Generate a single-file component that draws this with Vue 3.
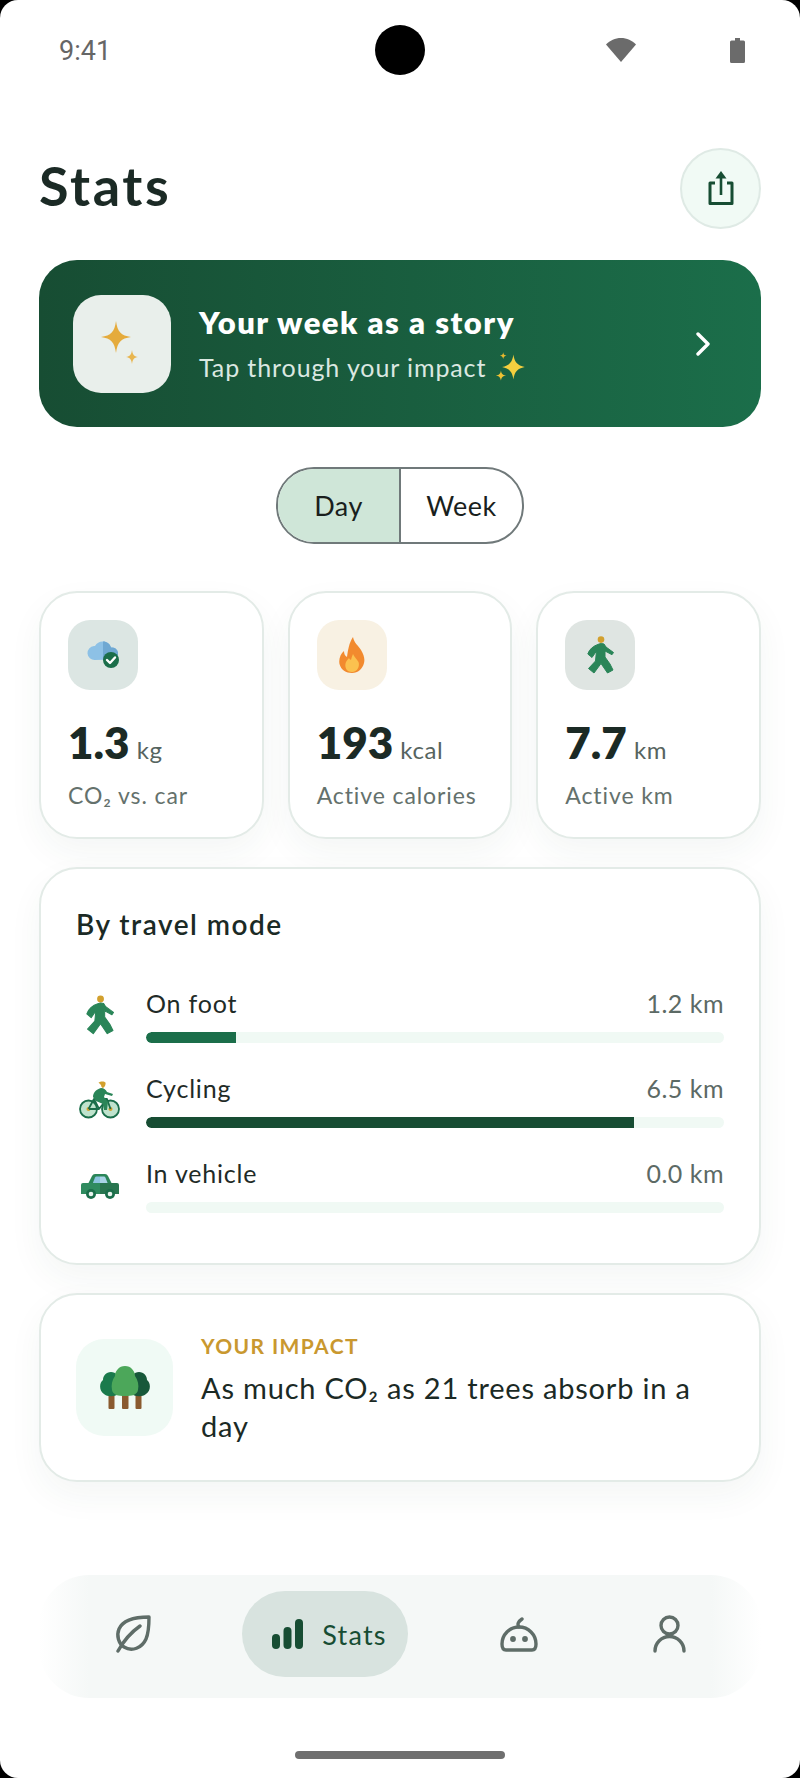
<script setup>
const stats = [
  { id: 'co2', value: '1.3', unit: 'kg', label: 'CO₂ vs. car', tint: 'tint-green' },
  { id: 'fire', value: '193', unit: 'kcal', label: 'Active calories', tint: 'tint-orange' },
  { id: 'walk', value: '7.7', unit: 'km', label: 'Active km', tint: 'tint-grey' },
]

const modes = [
  { id: 'foot', name: 'On foot', value: '1.2 km', pct: 15.6, color: '#1b6e4a' },
  { id: 'bike', name: 'Cycling', value: '6.5 km', pct: 84.4, color: '#174d33' },
  { id: 'car', name: 'In vehicle', value: '0.0 km', pct: 0, color: '#1b6e4a' },
]

const walkerBody = 'M12 8Q14 7 17 8L19 11 26.500 16.500 25 18.700 18 15 18 21 23 28 26 34 20.500 37 14 27.500 7 37 1.500 32.500 8.500 25 9.500 15 5 21.500.8 18Q3 11 12 8Z'
</script>

<template>
  <div class="frame">
    <div class="screen">
      <div class="status">
        <span class="time">9:41</span>
        <span class="camera"></span>
        <div class="status-icons">
          <svg width="30" height="24" viewBox="0 0 30 24"><path d="M15 24 0 6.5C4 2.5 9 0 15 0s11 2.5 15 6.5z" fill="#6b6b6b" /></svg>
          <svg width="15" height="25" viewBox="0 0 15 25"><path d="M5 0h5v2.500h3.500q1.500 0 1.500 1.500v19.500q0 1.500-1.500 1.500h-12q-1.500 0-1.500-1.500v-19.500q0-1.500 1.500-1.500h3.500z" fill="#6b6b6b" /></svg>
        </div>
      </div>

      <main class="content">
        <header class="head">
          <h1>Stats</h1>
          <button class="share">
            <svg width="26" height="34" viewBox="0 0 26 34" fill="none">
              <path d="M7 12H2v20.500h22V12h-5" stroke="#174d33" stroke-width="3" stroke-linejoin="round" />
              <path d="M13 6v18" stroke="#174d33" stroke-width="2.600" />
              <path d="M13 0l5.500 7.500h-11z" fill="#174d33" />
            </svg>
          </button>
        </header>

        <section class="story">
          <div class="story-icon">
            <svg width="46" height="52" viewBox="0 0 46 52">
              <path d="M17 3c1.500 11 5 14.500 15 16-10 1.500-13.500 5-15 16-1.500-11-5-14.500-15-16 10-1.500 13.500-5 15-16z" fill="#e5ab3c" />
              <path d="M33 32c.6 4.500 2 6.400 6 7-4 .6-5.400 2.500-6 7-.6-4.500-2-6.400-6-7 4-.6 5.400-2.500 6-7z" fill="#e8b54e" />
            </svg>
          </div>
          <div class="story-text">
            <div class="story-title">Your week as a story</div>
            <div class="story-sub">
              Tap through your impact
              <svg class="sparkles" width="34" height="32" viewBox="0 0 30 28">
                <path d="M18 3c1 7 3.500 9.500 10 11-6.500 1.500-9 4-10 11-1-7-3.500-9.500-10-11 6.500-1.500 9-4 10-11z" fill="#f5d03f" />
                <path d="M7 17c.5 3 1.500 4 4.500 4.500-3 .5-4 1.500-4.500 4.500-.5-3-1.500-4-4.500-4.500 3-.5 4-1.500 4.500-4.500z" fill="#f0c233" />
                <path d="M9 1c.3 2 1 2.700 3 3-2 .3-2.700 1-3 3-.3-2-1-2.700-3-3 2-.3 2.700-1 3-3z" fill="#e8b82e" />
              </svg>
            </div>
          </div>
          <svg class="chevron" width="16" height="24" viewBox="0 0 16 24" fill="none">
            <path d="M3 2l10 10L3 22" stroke="#fff" stroke-width="3.400" stroke-linecap="round" stroke-linejoin="round" />
          </svg>
        </section>

        <div class="toggle">
          <span class="seg seg-on">Day</span>
          <span class="seg">Week</span>
        </div>

        <section class="stat-row">
          <div v-for="s in stats" :key="s.id" class="card stat">
            <div class="stat-icon" :class="s.tint">
              <svg v-if="s.id === 'co2'" width="34" height="28" viewBox="0 0 34 28">
                <path d="M9 19a7 7 0 0 1-1-14h1a9 9 0 0 1 8-4.500c4 0 7 2.500 8 6a6 6 0 0 1 2 12z" fill="#8dc1e6" />
                <path d="M17 .5c4 0 7 2.500 8 6a6 6 0 0 1 2 12H17z" fill="#6fa8d2" />
                <circle cx="25" cy="19" r="8" fill="#1b6e4a" />
                <path d="M21 19l3 3 5-5.500" fill="none" stroke="#fff" stroke-width="2.400" stroke-linecap="round" stroke-linejoin="round" />
              </svg>
              <svg v-else-if="s.id === 'fire'" width="26" height="36" viewBox="0 0 26 36">
                <path d="M14 0c1 6 5 8 8 13 3 5 4 9 3 13-1.500 6-6 10-12 10S2 33 .5 27C-.5 22 1.500 17 5 14c0 3 1 5 3 6 1-7 2-14 6-20z" fill="#f28a2e" />
                <path d="M14 17c1 3 4 5 5.500 8 1.500 4-1 10-6.500 10S5 30 7 25c1-2 2-2.500 3-4 .5 1 1 1.500 2 2 .5-2 1-4 2-6z" fill="#fbc14f" />
              </svg>
              <svg v-else width="27" height="38" viewBox="0 0 27 38">
                <circle cx="14" cy="3.600" r="3.300" fill="#d2a02e" />
                <path :d="walkerBody" fill="#2a8558" stroke="#2a8558" stroke-linejoin="round" />
              </svg>
            </div>
            <div class="stat-value"><b>{{ s.value }}</b> <span>{{ s.unit }}</span></div>
            <div class="stat-label">{{ s.label }}</div>
          </div>
        </section>

        <section class="card modes">
          <h2>By travel mode</h2>
          <div v-for="m in modes" :key="m.id" class="mode">
            <div class="mode-icon">
              <svg v-if="m.id === 'foot'" width="28" height="40" viewBox="0 0 27 38">
                <circle cx="14" cy="3.600" r="3.300" fill="#d2a02e" />
                <path :d="walkerBody" fill="#2a8558" stroke="#2a8558" stroke-linejoin="round" />
              </svg>
              <svg v-else-if="m.id === 'bike'" width="41" height="38" viewBox="0 0 41 38" fill="none">
                <circle cx="9.500" cy="28" r="8.500" fill="#bfe3cd" stroke="#1b6e4a" stroke-width="1.800" />
                <circle cx="31.500" cy="28" r="8.500" fill="#bfe3cd" stroke="#1b6e4a" stroke-width="1.800" />
                <circle cx="9.500" cy="28" r="2" fill="#d2a02e" />
                <circle cx="31.500" cy="28" r="2" fill="#d2a02e" />
                <path d="M9.500 28 15 18h13l3.500 10M15 18l5 10h-10M28 18l-8 10" stroke="#1b6e4a" stroke-width="1.800" stroke-linejoin="round" />
                <path d="M19.500 1.500c2-1.500 6-1.500 7 0 .5 1.500-.5 4.500-2.500 5.500-1 0-2-1.500-2-3z" fill="#d2a02e" />
                <path d="M14 16c0-5 4-8 8-9 3 0 5 2 6 4l6 2-1 2-7-2-1 3 4 5-1 8h-3l-1-6-7-3z" fill="#2a8558" />
              </svg>
              <svg v-else class="car" width="38" height="26" viewBox="0 0 38 26">
                <path d="M7 10 11 2q1-2 3-2h10q2 0 3 2l4 8z" fill="#2a8558" />
                <path d="M11.500 10 14 3.500q.4-1 1.400-1H19V10z" fill="#8cc4df" />
                <path d="M19 2.500h4q1 0 1.400 1L27 10h-8z" fill="#a8d3e6" />
                <path d="M2 9h17v11H0v-9q0-2 2-2z" fill="#2f8b5f" />
                <path d="M19 9h17q2 0 2 2v9H19z" fill="#28754f" />
                <circle cx="10" cy="20" r="5" fill="#1b6e4a" />
                <circle cx="10" cy="20" r="2.300" fill="#e8f4ee" />
                <circle cx="29" cy="20" r="5" fill="#1b6e4a" />
                <circle cx="29" cy="20" r="2.300" fill="#e8f4ee" />
              </svg>
            </div>
            <div class="mode-body">
              <div class="mode-line">
                <span class="mode-name">{{ m.name }}</span>
                <span class="mode-val">{{ m.value }}</span>
              </div>
              <div class="track">
                <div class="fill" :style="{ width: m.pct + '%', background: m.color }"></div>
              </div>
            </div>
          </div>
        </section>

        <section class="card impact">
          <div class="impact-icon">
            <svg width="50" height="43" viewBox="0 0 50 43">
              <rect x="8.500" y="28" width="6" height="15" rx="1" fill="#8a5a2f" />
              <rect x="35.500" y="28" width="6" height="15" rx="1" fill="#8a5a2f" />
              <path d="M11 6c5 0 8 4 8 8 3 3 3 11-1 14-3 3-11 3-14 0-5-3-5-11-1-14 0-4 3-8 8-8z" fill="#1a7a4c" />
              <path d="M39 6c-5 0-8 4-8 8-3 3-3 11 1 14 3 3 11 3 14 0 5-3 5-11 1-14 0-4-3-8-8-8z" fill="#17583a" />
              <rect x="22" y="26" width="6.500" height="17" rx="1" fill="#8a5a2f" />
              <path d="M25 0c6 0 10 5 10 10 3 4 4 9 3 14-1 5-6 6-13 6s-12-1-13-6c-1-5 0-10 3-14 0-5 4-10 10-10z" fill="#4ca75a" />
            </svg>
          </div>
          <div class="impact-text">
            <div class="impact-tag">YOUR IMPACT</div>
            <div class="impact-body">As much CO₂ as 21 trees absorb in a day</div>
          </div>
        </section>
      </main>

      <nav class="nav">
        <div class="nav-item">
          <svg width="36" height="38" viewBox="0 0 36 38" fill="none" stroke="#5f6d68" stroke-width="3.400" stroke-linecap="round" stroke-linejoin="round">
            <path d="M34 2C20 2 8 5 4 14c-3 7 0 15 5 18 8 5 18 1 22-8 3-7 3-15 3-22z" />
            <path d="M3 36C8 27 15 18 25 11" />
          </svg>
        </div>
        <div class="nav-item nav-on">
          <svg width="31" height="30" viewBox="0 0 31 30">
            <rect x="0" y="15" width="8" height="15" rx="4" fill="#174d33" />
            <rect x="11.500" y="8" width="8" height="22" rx="4" fill="#174d33" />
            <rect x="23" y="0" width="8" height="30" rx="4" fill="#174d33" />
          </svg>
          <span>Stats</span>
        </div>
        <div class="nav-item">
          <svg width="38" height="35" viewBox="0 0 38 35" fill="none" stroke="#5f6d68" stroke-width="3.400" stroke-linecap="round" stroke-linejoin="round">
            <path d="M2 27a17 17 0 0 1 34 0q0 6-4 6H6q-4 0-4-6z" />
            <path d="M19 10q-3-4 3-8" />
            <circle cx="13" cy="22" r="1.200" fill="#5f6d68" />
            <circle cx="25" cy="22" r="1.200" fill="#5f6d68" />
          </svg>
        </div>
        <div class="nav-item">
          <svg width="33" height="38" viewBox="0 0 33 38" fill="none" stroke="#5f6d68" stroke-width="3.400" stroke-linecap="round">
            <circle cx="16.500" cy="10.500" r="8.500" />
            <path d="M2 36a14.500 14.500 0 0 1 29 0" />
          </svg>
        </div>
      </nav>

      <div class="home-bar"></div>
    </div>
  </div>
</template>

<style>
html, body { margin: 0; background: #000; }
</style>

<style scoped>
.frame {
  width: 800px;
  height: 1778px;
  background: #000;
  overflow: hidden;
}
.screen {
  width: 800px;
  height: 1778px;
  background: #fff;
  border-radius: 18px;
  display: flex;
  flex-direction: column;
  overflow: hidden;
  font-family: "Lato", "Noto Sans", sans-serif;
  color: #1b2a25;
  box-sizing: border-box;
}
.status {
  height: 100px;
  flex: none;
  display: flex;
  align-items: center;
  justify-content: space-between;
  padding: 0 55px 0 59px;
  position: relative;
}
.time {
  font-family: "Roboto", sans-serif;
  font-size: 27px;
  color: #666;
  margin-top: 2px;
}
.camera {
  position: absolute;
  left: 375px;
  top: 25px;
  width: 50px;
  height: 50px;
  border-radius: 50%;
  background: #000;
}
.status-icons {
  display: flex;
  align-items: center;
  gap: 94px;
}
.content {
  padding: 0 39px;
  display: flex;
  flex-direction: column;
}
.head {
  display: flex;
  justify-content: space-between;
  align-items: center;
  height: 80px;
  margin-top: 48px;
}
h1 {
  margin: -4px 0 0;
  font-size: 54px;
  font-weight: 700;
  letter-spacing: 2.600px;
  line-height: 1;
}
.share {
  width: 81px;
  height: 81px;
  border-radius: 50%;
  border: 2px solid #dfeae5;
  background: #f1faf5;
  display: flex;
  align-items: center;
  justify-content: center;
  padding: 0;
}
.story {
  margin-top: 32px;
  height: 167px;
  border-radius: 38px;
  background: linear-gradient(90deg, #174d33, #1b6e4a);
  display: flex;
  align-items: center;
  padding: 0 50px 0 34px;
  color: #fff;
}
.story-icon {
  width: 98px;
  height: 98px;
  border-radius: 28px;
  background: #e9efeb;
  display: flex;
  align-items: center;
  justify-content: center;
  flex: none;
}
.story-text {
  flex: 1;
  margin-left: 28px;
}
.story-title {
  font-size: 31px;
  font-weight: 800;
  letter-spacing: 1.500px;
  line-height: 40px;
  margin-top: -1px;
}
.story-sub {
  margin-top: 8px;
  font-size: 25px;
  color: #dbe8e1;
  letter-spacing: 0.9px;
  display: flex;
  align-items: center;
  gap: 7px;
  line-height: 34px;
}
.toggle {
  align-self: center;
  margin-top: 40px;
  width: 248px;
  height: 77px;
  box-sizing: border-box;
  border: 2px solid #70797a;
  border-radius: 38px;
  display: flex;
  overflow: hidden;
}
.seg {
  flex: 1;
  display: flex;
  align-items: center;
  justify-content: center;
  font-size: 27px;
  letter-spacing: 0.5px;
  color: #1a1f1d;
}
.seg-on {
  background: #cfe6d8;
  border-right: 2px solid #70797a;
}
.card {
  background: #fff;
  border: 2px solid #e3ebe7;
  border-radius: 38px;
  box-sizing: border-box;
  box-shadow: 0 14px 34px rgba(30, 70, 50, 0.05);
}
.stat-row {
  margin-top: 47px;
  display: grid;
  grid-template-columns: repeat(3, 1fr);
  gap: 24px;
}
.stat {
  height: 248px;
  padding: 27px 27px;
}
.stat-icon {
  width: 70px;
  height: 70px;
  border-radius: 22px;
  display: flex;
  align-items: center;
  justify-content: center;
}
.tint-green { background: #dce6e3; }
.tint-orange { background: #f8f1e3; }
.tint-grey { background: #dfe5e2; }
.stat-value {
  margin-top: 26px;
  line-height: 52px;
  white-space: nowrap;
}
.stat-value b {
  font-size: 44px;
  font-weight: 800;
  color: #1b2a25;
}
.stat-value span {
  font-size: 24px;
  color: #56645f;
  margin-left: 3px;
  letter-spacing: 0.6px;
}
.stat-label {
  margin-top: 2px;
  font-size: 23px;
  color: #64716c;
  white-space: nowrap;
  letter-spacing: 0.9px;
}
.modes {
  margin-top: 28px;
  height: 398px;
  padding: 35px 35px 0;
}
h2 {
  margin: 0 0 28px;
  font-size: 28px;
  font-weight: 600;
  line-height: 40px;
  letter-spacing: 1.500px;
}
.mode {
  display: flex;
  align-items: center;
  height: 85px;
}
.mode-icon {
  width: 47px;
  margin-right: 23px;
  display: flex;
  justify-content: center;
  flex: none;
}
.car {
  margin-top: 4px;
}
.mode-body {
  flex: 1;
}
.mode-line {
  display: flex;
  justify-content: space-between;
  font-size: 25px;
  line-height: 34px;
}
.mode-name { color: #1f2b27; letter-spacing: 0.8px; }
.mode-val { color: #5c6a65; letter-spacing: 0.5px; }
.track {
  margin-top: 12px;
  height: 11px;
  border-radius: 6px;
  background: #f0f9f4;
  overflow: hidden;
}
.fill {
  height: 100%;
  border-radius: 6px 0 0 6px;
}
.impact {
  margin-top: 28px;
  height: 189px;
  padding: 0 35px;
  display: flex;
  align-items: center;
}
.impact-icon {
  width: 97px;
  height: 97px;
  border-radius: 28px;
  background: #f0faf5;
  display: flex;
  align-items: center;
  justify-content: center;
  flex: none;
}
.impact-text {
  margin-left: 28px;
  width: 510px;
}
.impact-tag {
  font-size: 21px;
  font-weight: 700;
  color: #c9982f;
  letter-spacing: 1.400px;
  line-height: 30px;
}
.impact-body {
  margin-top: 8px;
  font-size: 29px;
  line-height: 38px;
  letter-spacing: 0.8px;
}
.nav {
  margin: auto 39px 0;
  height: 123px;
  flex: none;
  box-sizing: border-box;
  padding: 0 0 5px 1px;
  border-radius: 50px;
  background: linear-gradient(90deg, #fff 0, #f5f8f7 50px, #f5f8f7 calc(100% - 50px), #fff 100%);
  display: grid;
  grid-template-columns: 186px 16px 166px 222px 78px;
  align-items: center;
}
.nav-item:nth-child(2) {
  grid-column: 3;
}
.nav-item {
  display: flex;
  align-items: center;
  justify-content: center;
}
.nav-on {
  height: 86px;
  box-sizing: border-box;
  padding-left: 9px;
  border-radius: 43px;
  background: #d8e3df;
  gap: 19px;
  font-size: 27px;
  color: #174d33;
  letter-spacing: 1.200px;
}
.home-bar {
  flex: none;
  width: 210px;
  height: 8px;
  border-radius: 4px;
  background: #6f6f6f;
  margin: 53px auto 19px;
}
</style>
